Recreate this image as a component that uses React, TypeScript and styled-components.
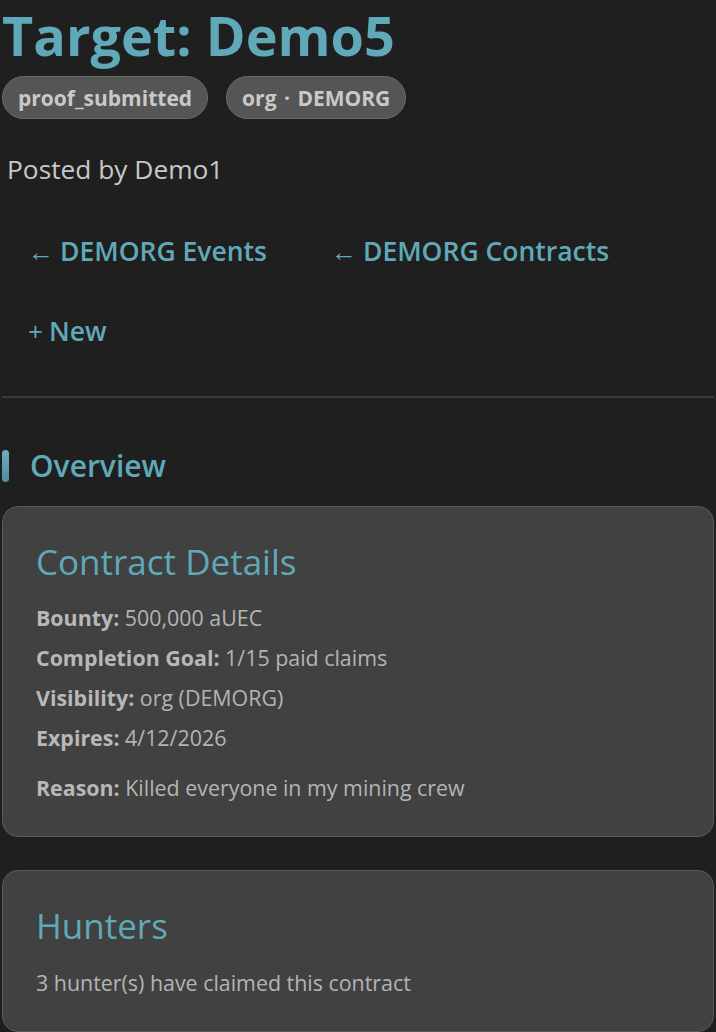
import React from "react";
import styled, { createGlobalStyle } from "styled-components";

const Global = createGlobalStyle`
  html, body { margin: 0; padding: 0; background: #1f1f1f; }
  body { font-family: "Open Sans", "Noto Sans", sans-serif; color: #c4c4c4; }
  * { box-sizing: border-box; }
`;

const Page = styled.div`
  padding: 0 2px;
  min-height: 1032px;
  background: #1f1f1f;
`;

const Title = styled.h1`
  margin: 0;
  padding-top: 0;
  font-size: 54px;
  line-height: 70px;
  font-weight: 700;
  color: #5fa9b9;
  white-space: nowrap;
`;

const BadgeRow = styled.div`
  display: flex;
  gap: 18px;
  margin-top: 6px;
`;

const Badge = styled.span`
  display: inline-flex;
  align-items: center;
  height: 43px;
  padding: 0 15px;
  border-radius: 22px;
  background: #555555;
  border: 1.5px solid #6b6b6b;
  color: #c9c9c9;
  font-size: 21px;
  font-weight: 700;
  word-spacing: 2px;
`;

const Posted = styled.p`
  margin: 32px 0 0 5px;
  font-size: 26.3px;
  line-height: 36px;
  color: #c8c8c8;
`;

const LinkRow = styled.div`
  display: flex;
  gap: 12px;
  margin-top: 34px;
`;

const NavLink = styled.a`
  display: inline-flex;
  align-items: center;
  gap: 6px;
  padding: 12px 26px;
  font-size: 26.5px;
  line-height: 36px;
  font-weight: 600;
  color: #5fa9b9;
  text-decoration: none;
`;

const Glyph = styled.span`
  font-size: 26px;
  font-weight: 400;
`;

const NewRow = styled.div`
  display: flex;
  margin-top: 20px;
`;

const Divider = styled.hr`
  margin: 35px 0 0;
  border: none;
  border-top: 2px solid #3a3a3a;
`;

const SectionHead = styled.div`
  display: flex;
  align-items: center;
  gap: 21px;
  margin-top: 50px;
`;

const Bar = styled.span`
  width: 7px;
  height: 32px;
  border-radius: 4px;
  background: linear-gradient(180deg, #6aaec0, #4f8ea0);
`;

const SectionTitle = styled.h2`
  margin: 0;
  font-size: 30px;
  line-height: 36px;
  font-weight: 600;
  color: #5fa9b9;
`;

const Card = styled.section<{ $mt: number }>`
  margin-top: ${(p) => p.$mt}px;
  background: #414141;
  border: 1.5px solid #5a5a5a;
  border-radius: 16px;
  padding: 31px 33px 28px;
`;

const CardTitle = styled.h3`
  margin: 0 0 12px;
  font-size: 35px;
  line-height: 48px;
  font-weight: 500;
  color: #5fa9b9;
`;

const Line = styled.div<{ $gap?: number }>`
  font-size: 21.4px;
  line-height: 40px;
  margin-top: ${(p) => p.$gap ?? 0}px;
  color: #b4b4b4;
  b { color: #b8b8b8; font-weight: 700; }
`;

export default function App() {
  return (
    <Page>
      <Global />
      <Title>Target: Demo5</Title>
      <BadgeRow>
        <Badge>proof_submitted</Badge>
        <Badge>org · DEMORG</Badge>
      </BadgeRow>
      <Posted>Posted by Demo1</Posted>
      <LinkRow>
        <NavLink href="#"><Glyph>←</Glyph>DEMORG Events</NavLink>
        <NavLink href="#"><Glyph>←</Glyph>DEMORG Contracts</NavLink>
      </LinkRow>
      <NewRow>
        <NavLink href="#"><Glyph>+</Glyph>New</NavLink>
      </NewRow>
      <Divider />
      <SectionHead>
        <Bar />
        <SectionTitle>Overview</SectionTitle>
      </SectionHead>
      <Card $mt={22}>
        <CardTitle>Contract Details</CardTitle>
        <Line><b>Bounty:</b> 500,000 aUEC</Line>
        <Line><b>Completion Goal:</b> 1/15 paid claims</Line>
        <Line><b>Visibility:</b> org (DEMORG)</Line>
        <Line><b>Expires:</b> 4/12/2026</Line>
        <Line $gap={10}><b>Reason:</b> Killed everyone in my mining crew</Line>
      </Card>
      <Card $mt={33}>
        <CardTitle>Hunters</CardTitle>
        <Line $gap={13}>3 hunter(s) have claimed this contract</Line>
      </Card>
    </Page>
  );
}
